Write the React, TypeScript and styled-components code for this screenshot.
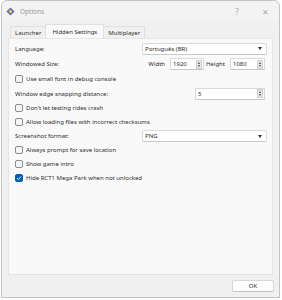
import React from "react";
import styled, { createGlobalStyle } from "styled-components";

const Global = createGlobalStyle`
  html, body {
    margin: 0;
    padding: 0;
    background: #ffffff;
  }
  body {
    font-family: "Noto Sans", "Liberation Sans", sans-serif;
    font-size: 6px;
    color: #2e2e2e;
  }
`;

const Window = styled.div`
  width: 279px;
  height: 298px;
  margin-left: 1px;
  border: 1px solid #c4c4c4;
  border-radius: 6px 6px 0 0;
  background: #f0f0f0;
  box-sizing: border-box;
  display: flex;
  flex-direction: column;
`;

const TitleBar = styled.div`
  height: 20px;
  display: flex;
  align-items: center;
  padding-left: 4px;
  background: #f3f3f3;
  border-radius: 6px 6px 0 0;
  flex-shrink: 0;
`;

const Title = styled.span`
  margin-left: 5px;
  color: #9a9a9a;
  font-size: 6.5px;
  flex: 1;
`;

const CaptionButton = styled.span`
  width: 28px;
  text-align: center;
  color: #a8a8a8;
  font-size: 8px;
`;

const TabBar = styled.div`
  display: flex;
  align-items: flex-end;
  margin: 3px 0 0 8px;
  height: 14px;
`;

const Tab = styled.div<{ active?: boolean }>`
  height: ${(p) => (p.active ? "14px" : "12px")};
  padding: 0 ${(p) => (p.active ? "6px" : "4px")};
  display: flex;
  align-items: center;
  background: ${(p) => (p.active ? "#f9f9f9" : "#f0f0f0")};
  border: 1px solid #e0e0e0;
  border-bottom: none;
  margin-left: ${(p) => (p.active ? "-1px" : "0")};
  margin-right: ${(p) => (p.active ? "-1px" : "0")};
  position: relative;
  z-index: ${(p) => (p.active ? 1 : 0)};
  box-sizing: border-box;
`;

const Panel = styled.div`
  margin: 0 6px 0 6px;
  height: 237px;
  background: #f9f9f9;
  border: 1px solid #e5e5e5;
  padding: 2px 5px 0 6px;
  box-sizing: border-box;
`;

const Row = styled.div<{ h: number }>`
  height: ${(p) => p.h}px;
  display: flex;
  align-items: center;
`;

const Label = styled.span`
  flex: 1;
  white-space: nowrap;
`;

const Controls = styled.div`
  width: 125px;
  display: flex;
  align-items: center;
  justify-content: flex-end;
`;

const Select = styled.div`
  width: 125px;
  height: 12px;
  box-sizing: border-box;
  background: #fff;
  border: 1px solid #dadada;
  border-bottom-color: #c8c8c8;
  border-radius: 2px;
  display: flex;
  align-items: center;
  padding: 0 4px 0 2px;
`;

const SelectText = styled.span`
  flex: 1;
`;

const Caret = styled.span`
  width: 0;
  height: 0;
  border-left: 2px solid transparent;
  border-right: 2px solid transparent;
  border-top: 3px solid #333;
`;

const SmallLabel = styled.span`
  margin: 0 5px 0 0;
`;

const Spin = styled.div<{ w: number }>`
  width: ${(p) => p.w}px;
  height: 12px;
  box-sizing: border-box;
  background: #fff;
  border: 1px solid #dadada;
  border-bottom-color: #c8c8c8;
  display: flex;
  align-items: center;
  padding-left: 2px;
  margin-right: 2px;
`;

const SpinValue = styled.span`
  flex: 1;
`;

const SpinButton = styled.div`
  width: 6px;
  height: 9px;
  margin-right: 1px;
  background: #e6e6e6;
  border: 1px solid #cfcfcf;
  box-sizing: border-box;
  display: flex;
  flex-direction: column;
  align-items: center;
  justify-content: center;
  gap: 1px;
`;

const Arrow = styled.span<{ up?: boolean }>`
  width: 0;
  height: 0;
  border-left: 1.5px solid transparent;
  border-right: 1.5px solid transparent;
  ${(p) => (p.up ? "border-bottom: 2px solid #444;" : "border-top: 2px solid #444;")}
`;

const Box = styled.span<{ checked?: boolean }>`
  width: 8px;
  height: 8px;
  box-sizing: border-box;
  border-radius: 2px;
  border: 1px solid ${(p) => (p.checked ? "#005fb8" : "#8a8a8a")};
  background: ${(p) => (p.checked ? "#005fb8" : "#f6f6f6")};
  margin-right: 3px;
  display: flex;
  align-items: center;
  justify-content: center;
`;

const Footer = styled.div`
  flex: 1;
  display: flex;
  align-items: center;
  justify-content: flex-end;
  padding-right: 5px;
`;

const Button = styled.div`
  width: 42px;
  height: 12px;
  box-sizing: border-box;
  background: #fdfdfd;
  border: 1px solid #d6d6d6;
  border-bottom-color: #c2c2c2;
  border-radius: 2px;
  display: flex;
  align-items: center;
  justify-content: center;
`;

const AppIcon = () => (
  <svg width="9" height="9" viewBox="0 0 10 10">
    <path d="M5 0.5 L9.5 5 L5 9.5 L0.5 5 Z" fill="#3b6fd1" />
    <path d="M5 2 L7.5 5 L5 8 L2.5 5 Z" fill="#f08a1c" />
    <circle cx="5" cy="5" r="1" fill="#fff3c0" />
  </svg>
);

const Check = ({ checked, children }: { checked?: boolean; children: React.ReactNode }) => (
  <>
    <Box checked={checked}>
      {checked && (
        <svg width="6" height="6" viewBox="0 0 6 6">
          <path d="M1 3.2 L2.4 4.5 L5 1.5" stroke="#fff" strokeWidth="0.9" fill="none" />
        </svg>
      )}
    </Box>
    <Label>{children}</Label>
  </>
);

const SpinBox = ({ value, w }: { value: string; w: number }) => (
  <Spin w={w}>
    <SpinValue>{value}</SpinValue>
    <SpinButton>
      <Arrow up />
      <Arrow />
    </SpinButton>
  </Spin>
);

export default function App() {
  return (
    <>
      <Global />
      <Window>
        <TitleBar>
          <AppIcon />
          <Title>Options</Title>
          <CaptionButton>?</CaptionButton>
          <CaptionButton>✕</CaptionButton>
        </TitleBar>
        <TabBar>
          <Tab>Launcher</Tab>
          <Tab active>Hidden Settings</Tab>
          <Tab>Multiplayer</Tab>
        </TabBar>
        <Panel>
          <Row h={15}>
            <Label>Language:</Label>
            <Select>
              <SelectText>Português (BR)</SelectText>
              <Caret />
            </Select>
          </Row>
          <Row h={16}>
            <Label>Windowed Size:</Label>
            <Controls>
              <SmallLabel>Width</SmallLabel>
              <SpinBox value="1920" w={34} />
              <SmallLabel>Height</SmallLabel>
              <SpinBox value="1080" w={35} />
            </Controls>
          </Row>
          <Row h={14}>
            <Check>Use small font in debug console</Check>
          </Row>
          <Row h={15}>
            <Label>Window edge snapping distance:</Label>
            <SpinBox value="5" w={70} />
          </Row>
          <Row h={14}>
            <Check>Don't let testing rides crash</Check>
          </Row>
          <Row h={14}>
            <Check>Allow loading files with incorrect checksums</Check>
          </Row>
          <Row h={14}>
            <Label>Screenshot format:</Label>
            <Select>
              <SelectText>PNG</SelectText>
              <Caret />
            </Select>
          </Row>
          <Row h={14}>
            <Check>Always prompt for save location</Check>
          </Row>
          <Row h={14}>
            <Check>Show game intro</Check>
          </Row>
          <Row h={13}>
            <Check checked>Hide RCT1 Mega Park when not unlocked</Check>
          </Row>
        </Panel>
        <Footer>
          <Button>OK</Button>
        </Footer>
      </Window>
    </>
  );
}
